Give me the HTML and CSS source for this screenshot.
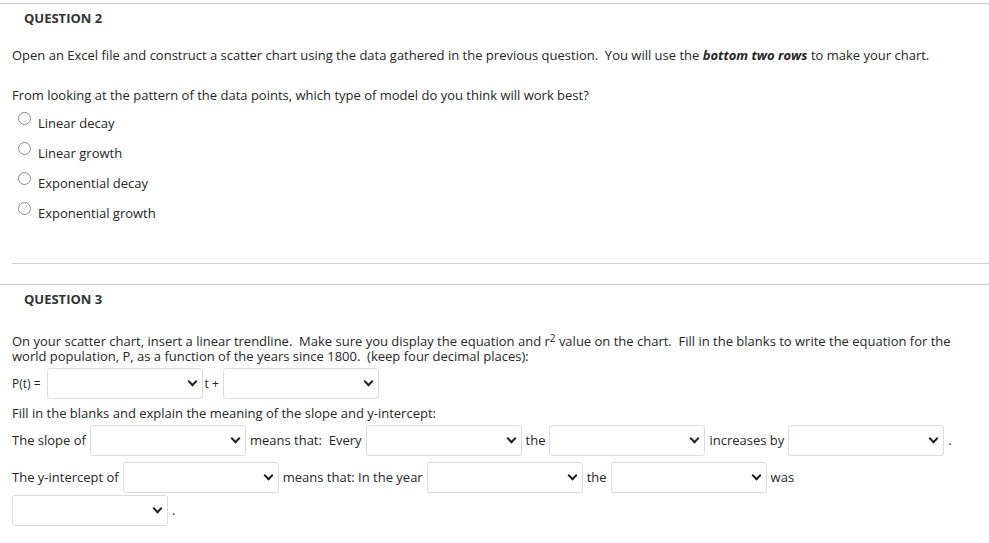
FILE: index.html
```html
<!DOCTYPE html>
<html>
<head>
<meta charset="utf-8">
<link rel="stylesheet" href="styles.css">
</head>
<body>
<div class="rule-full top"></div>
<section class="q q2">
  <h2 class="qtitle">QUESTION 2</h2>
  <p class="lead">Open an Excel file and construct a scatter chart using the data gathered in the previous question.&nbsp; You will use the <b><i>bottom two rows</i></b> to make your chart.</p>
  <p class="ask">From looking at the pattern of the data points, which type of model do you think will work best?</p>
  <ul class="opts">
    <li><span class="radio"></span><span class="opt">Linear decay</span></li>
    <li><span class="radio"></span><span class="opt">Linear growth</span></li>
    <li><span class="radio"></span><span class="opt">Exponential decay</span></li>
    <li><span class="radio"></span><span class="opt">Exponential growth</span></li>
  </ul>
</section>
<div class="rule-inset"></div>
<div class="rule-full sep"></div>
<section class="q q3">
  <h2 class="qtitle">QUESTION 3</h2>
  <p class="para">On your scatter chart, insert a linear trendline.&nbsp; Make sure you display the equation and r<sup>2</sup> value on the chart.&nbsp; Fill in the blanks to write the equation for the world population, P, as a function of the years since 1800.&nbsp; (keep four decimal places):</p>
  <div class="row r1"><span class="lbl small wide">P(t) =</span><span class="sel"></span><span class="lbl small tight">t +</span><span class="sel"></span></div>
  <p class="fill">Fill in the blanks and explain the meaning of the slope and y-intercept:</p>
  <div class="row r2"><span class="lbl">The slope of</span><span class="sel"></span><span class="lbl">means that:&nbsp; Every</span><span class="sel"></span><span class="lbl">the</span><span class="sel"></span><span class="lbl">increases by</span><span class="sel"></span><span class="lbl">.</span></div>
  <div class="row r3"><span class="lbl">The y-intercept of</span><span class="sel"></span><span class="lbl">means that: In the year</span><span class="sel"></span><span class="lbl">the</span><span class="sel"></span><span class="lbl">was</span></div>
  <div class="row r4"><span class="sel"></span><span class="lbl">.</span></div>
</section>
</body>
</html>
```
FILE: styles.css
```css
html, body { margin: 0; padding: 0; background: #fff; }
body {
  font-family: "Open Sans", "Liberation Sans", sans-serif;
  font-size: 13px;
  color: #262626;
  width: 989px;
  height: 543px;
  overflow: hidden;
}
.rule-full { border-top: 1px solid #cfcfcf; }
.rule-full.top { margin-top: 3px; }
.rule-inset { border-top: 1px solid #cfcfcf; margin-left: 12px; margin-top: 37px; }
.rule-full.sep { margin-top: 20px; }
.q { padding: 0 12px; }
.qtitle {
  margin: 0;
  padding-left: 12px;
  font-size: 13px;
  font-weight: 700;
  color: #333;
  line-height: 18px;
}
.q2 .qtitle { padding-top: 5px; }
.lead { margin: 20px 0 0; line-height: 17px; }
.ask { margin: 23px 0 0; line-height: 17px; }
.opts { list-style: none; margin: 2px 0 0; padding: 0; }
.opts li { display: flex; align-items: center; height: 30px; }
.radio {
  width: 11px; height: 11px;
  border: 1px solid #8a8a8a;
  border-radius: 50%;
  margin-left: 6px;
  margin-top: -6px;
  margin-right: 7px;
  flex: none;
}
.opt { font-size: 13px; line-height: 16px; padding-top: 4px; }
.q3 .qtitle { padding-top: 5px; }
.para { margin: 26px 0 0; line-height: 15px; }
.para sup { font-size: 10px; line-height: 0; vertical-align: 4px; }
.row { display: flex; align-items: center; flex-wrap: wrap; }
.r1 { margin-top: 4px; }
.lbl.small { font-size: 12px; }
.lbl.wide { margin-right: 6px; }
.lbl.tight { margin-left: -2px; }
.lbl { margin-right: 4px; line-height: 17px; }
.sel {
  position: relative;
  width: 154px;
  height: 29px;
  border: 1px solid #dcdcdc;
  border-radius: 3px;
  margin-right: 4px;
  flex: none;
}
.sel::after {
  content: "";
  position: absolute;
  right: 6px;
  top: 9px;
  width: 5px;
  height: 5px;
  border-right: 2px solid #222;
  border-bottom: 2px solid #222;
  transform: rotate(45deg);
}
.fill { margin: 6px 0 0; line-height: 17px; }
.r2 { margin-top: 3px; }
.r3 { margin-top: 6px; }
.r4 { margin-top: 2px; }
```
